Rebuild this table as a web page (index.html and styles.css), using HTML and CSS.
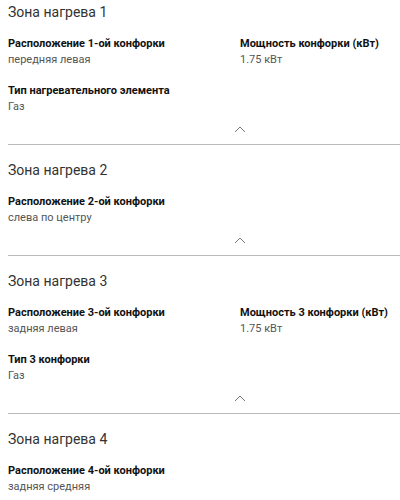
FILE: index.html
```html
<!DOCTYPE HTML>
<html>
    <head>
        <meta charset="utf-8">
        <link rel="stylesheet" href="styles.css">
    </head>

    <body>
        <div class="zone first">
            <h2 class="zone-title">Зона нагрева 1</h2>
            <div class="specs">
                <div class="spec">
                    <div class="spec-label">Расположение 1-ой конфорки</div>
                    <div class="spec-value">передняя левая</div>
                </div>
                <div class="spec">
                    <div class="spec-label">Мощность конфорки (кВт)</div>
                    <div class="spec-value">1.75 кВт</div>
                </div>
                <div class="spec">
                    <div class="spec-label">Тип нагревательного элемента</div>
                    <div class="spec-value">Газ</div>
                </div>
            </div>
            <div class="toggle">
                <svg width="12" height="7" viewBox="0 0 12 7"><polyline points="1,6 6,1 11,6" fill="none" stroke="#777" stroke-width="1"/></svg>
            </div>
        </div>

        <div class="zone">
            <h2 class="zone-title">Зона нагрева 2</h2>
            <div class="specs">
                <div class="spec">
                    <div class="spec-label">Расположение 2-ой конфорки</div>
                    <div class="spec-value">слева по центру</div>
                </div>
            </div>
            <div class="toggle">
                <svg width="12" height="7" viewBox="0 0 12 7"><polyline points="1,6 6,1 11,6" fill="none" stroke="#777" stroke-width="1"/></svg>
            </div>
        </div>

        <div class="zone">
            <h2 class="zone-title">Зона нагрева 3</h2>
            <div class="specs">
                <div class="spec">
                    <div class="spec-label">Расположение 3-ой конфорки</div>
                    <div class="spec-value">задняя левая</div>
                </div>
                <div class="spec">
                    <div class="spec-label">Мощность 3 конфорки (кВт)</div>
                    <div class="spec-value">1.75 кВт</div>
                </div>
                <div class="spec">
                    <div class="spec-label">Тип 3 конфорки</div>
                    <div class="spec-value">Газ</div>
                </div>
            </div>
            <div class="toggle">
                <svg width="12" height="7" viewBox="0 0 12 7"><polyline points="1,6 6,1 11,6" fill="none" stroke="#777" stroke-width="1"/></svg>
            </div>
        </div>

        <div class="zone last">
            <h2 class="zone-title">Зона нагрева 4</h2>
            <div class="specs">
                <div class="spec">
                    <div class="spec-label">Расположение 4-ой конфорки</div>
                    <div class="spec-value">задняя средняя</div>
                </div>
            </div>
        </div>
    </body>
</html>
```

FILE: styles.css
```css
* {
    margin: 0;
    padding: 0;
    box-sizing: border-box;
}

body {
    background-color: #fff;
    font-family: Roboto, "Liberation Sans", sans-serif;
    padding-left: 8px;
    overflow: hidden;
}

.zone {
    padding-top: 15px;
    border-bottom: 1px solid #b9babb;
}

.zone.first {
    padding-top: 2px;
}

.zone.last {
    border-bottom: none;
}

.zone-title {
    font-size: 14px;
    font-weight: normal;
    line-height: 20px;
    color: #333;
    margin-bottom: 14px;
}

.specs {
    display: grid;
    grid-template-columns: 232px 1fr;
    row-gap: 15px;
}

.spec-label {
    font-size: 11px;
    font-weight: bold;
    line-height: 16px;
    color: #111;
}

.spec-value {
    font-size: 11px;
    line-height: 16px;
    color: #555;
}

.toggle {
    display: flex;
    padding-left: 226px;
    height: 29px;
    align-items: center;
}
```
